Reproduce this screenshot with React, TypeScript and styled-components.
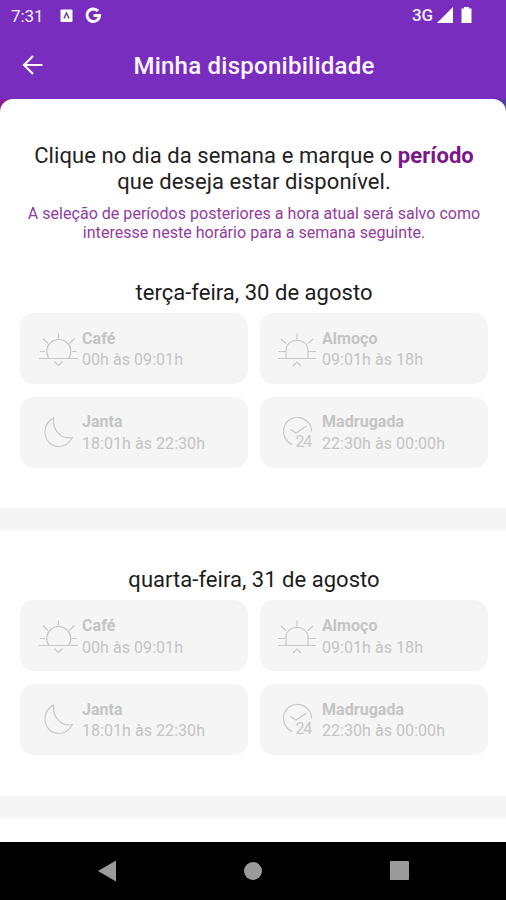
import React from "react";
import styled, { createGlobalStyle } from "styled-components";

const GlobalStyle = createGlobalStyle`
  * { box-sizing: border-box; }
  html, body { margin: 0; padding: 0; background: #fff; overflow: hidden; }
  body { font-family: Roboto, "Liberation Sans", sans-serif; }
  svg { display: block; }
`;

const Screen = styled.div`
  width: 506px;
  height: 900px;
  display: flex;
  flex-direction: column;
  overflow: hidden;
  background: #782dbf;
`;

const StatusBar = styled.div`
  height: 32px;
  flex: none;
  display: flex;
  align-items: center;
  padding: 0 32px 0 11px;
  color: #f6effc;
`;

const Clock = styled.span`
  width: 49px;
  font-size: 17px;
  line-height: 20px;
  letter-spacing: -0.05px;
`;

const Network = styled.span`
  margin-left: auto;
  margin-right: 4px;
  font-size: 17px;
  line-height: 20px;
  padding-bottom: 2px;
  font-weight: 500;
  letter-spacing: -0.1px;
`;

const Header = styled.header`
  height: 67px;
  flex: none;
  display: grid;
  grid-template-columns: 80px 1fr 80px;
  align-items: center;
  color: #fbf6ff;
`;

const BackButton = styled.button`
  border: 0;
  padding: 0 0 1px 20px;
  background: none;
  color: inherit;
`;

const Title = styled.h1`
  margin: 0;
  padding: 1px 0 0 2px;
  text-align: center;
  font-size: 24px;
  line-height: 28px;
  font-weight: 500;
  letter-spacing: 0.25px;
  white-space: nowrap;
`;

const SheetBackdrop = styled.div`
  flex: 1;
  min-height: 0;
  display: flex;
  background: linear-gradient(90deg, #8c1c93 0 50%, #5a3aa6 50%);
`;

const Sheet = styled.main`
  flex: 1;
  overflow: hidden;
  background: #fff;
  border-radius: 13px 13px 0 0;
`;

const Intro = styled.p`
  margin: 44px 0 0;
  padding-left: 2px;
  text-align: center;
  font-size: 22px;
  line-height: 25.5px;
  letter-spacing: 0.07px;
  color: #222;
  white-space: nowrap;
`;

const Accent = styled.strong`
  font-weight: 700;
  color: #7b1588;
`;

const Note = styled.p`
  margin: 10px 0 0;
  padding-left: 2px;
  text-align: center;
  font-size: 16px;
  line-height: 19px;
  letter-spacing: 0.03px;
  color: #913c9e;
  white-space: nowrap;
`;

const DaySection = styled.section`
  height: 287.3px;
  padding: 37px 18px 0 20px;
  border-bottom: 22px solid #f5f5f5;

  &:first-of-type {
    margin-top: 1px;
  }
`;

const DayTitle = styled.h2`
  margin: 0 0 7px;
  text-align: center;
  font-size: 22px;
  line-height: 26px;
  font-weight: 400;
  letter-spacing: 0.03px;
  color: #1c1c1c;
`;

const Grid = styled.div`
  display: grid;
  grid-template-columns: 1fr 1fr;
  gap: 12.5px 12px;
`;

const Card = styled.div`
  height: 71px;
  display: flex;
  align-items: center;
  padding-left: 18px;
  border-radius: 14px;
  background: #f5f5f5;
  color: #c4c4c4;
`;

const CardIcon = styled.div`
  width: 44px;
  flex: none;
`;

const CardText = styled.div`
  padding-top: 1.5px;
  font-size: 16px;
  line-height: 21.5px;
  letter-spacing: 0.05px;
`;

const CardName = styled.div`
  font-weight: 700;
`;

const CardHours = styled.div`
  white-space: nowrap;
`;

const NavBar = styled.nav`
  height: 58.5px;
  flex: none;
  display: flex;
  justify-content: center;
  align-items: center;
  background: #000;
`;

const NavSlot = styled.div`
  width: 146px;
  display: flex;
  justify-content: center;
`;

type PeriodKind = "sunrise" | "noon" | "moon" | "clock";

const PeriodIcon = ({ kind }: { kind: PeriodKind }) => (
  <svg width="40" height="40" viewBox="0 0 40 40" fill="none" stroke="#c8c8c8" strokeWidth="1.2">
    {kind === "sunrise" && (
      <path d="M1 29.500H40M11 29.500A12 12 0 1 1 30.500 29.500M20.500 4.500V9.500M5 9.500L10 14.500M36.500 9.500L31.500 14.500M2 22.500H7M34 22.500H38.500M16.500 32.500L20.500 36.500L24.500 32.500" />
    )}
    {kind === "noon" && (
      <path d="M0 29.500H38M8 29V21.500C8 8 30 8 30 21.500V29M19 4.500V10.500M3 10L8 14.500M35 10L30 14.500M0 22.500H8M30 22.500H38M15 37L19 33L23 37" />
    )}
    {kind === "moon" && (
      <path d="M15.500 6C2 12.500 5 34 20.500 34.500C26.500 34.500 31.500 31 34.300 25.500C23 28 14.500 18 15.500 6Z" />
    )}
    {kind === "clock" && (
      <>
        <path d="M14.500 32.500A14 14 0 1 1 33.500 19.500M12.500 17.500L18 21L28.500 14" />
        <text x="17.500" y="34.500" fontSize="16" letterSpacing="-1.2" fill="#c8c8c8" stroke="none">24</text>
      </>
    )}
  </svg>
);

const periods: { kind: PeriodKind; name: string; hours: string }[] = [
  { kind: "sunrise", name: "Café", hours: "00h às 09:01h" },
  { kind: "noon", name: "Almoço", hours: "09:01h às 18h" },
  { kind: "moon", name: "Janta", hours: "18:01h às 22:30h" },
  { kind: "clock", name: "Madrugada", hours: "22:30h às 00:00h" },
];

const days = ["terça-feira, 30 de agosto", "quarta-feira, 31 de agosto"];

export default function App() {
  return (
    <Screen>
      <GlobalStyle />
      <StatusBar>
        <Clock>7:31</Clock>
        <svg width="42" height="18" viewBox="0 0 42 18">
          <rect x="0.500" y="2.500" width="12" height="12.500" rx="1" fill="#fff" />
          <path d="M4 11.500L6.500 6L9 11.500" fill="none" stroke="#6f3aa5" strokeWidth="1.500" />
          <path d="M38 4A6.300 6.300 0 1 0 39.600 8.500H33.500" fill="none" stroke="#fff" strokeWidth="3" />
        </svg>
        <Network>3G</Network>
        <svg width="37" height="18" viewBox="0 0 37 18" fill="#fff">
          <path d="M0 16L16 0V16Z" />
          <path d="M24.500 1.500L27 1.500V0H32V1.500L34.500 1.500V16H24.500Z" />
        </svg>
      </StatusBar>
      <Header>
        <BackButton aria-label="Voltar">
          <svg width="24" height="24" viewBox="0 0 24 24" fill="none" stroke="currentColor" strokeWidth="2.200">
            <path d="M22.500 12H4M13 3L4 12L13 21" />
          </svg>
        </BackButton>
        <Title>Minha disponibilidade</Title>
      </Header>
      <SheetBackdrop>
        <Sheet>
          <Intro>
            Clique no dia da semana e marque o <Accent>período</Accent>
            <br />
            que deseja estar disponível.
          </Intro>
          <Note>
            A seleção de períodos posteriores a hora atual será salvo como
            <br />
            interesse neste horário para a semana seguinte.
          </Note>
          {days.map((day) => (
            <DaySection key={day}>
              <DayTitle>{day}</DayTitle>
              <Grid>
                {periods.map((p) => (
                  <Card key={p.kind}>
                    <CardIcon>
                      <PeriodIcon kind={p.kind} />
                    </CardIcon>
                    <CardText>
                      <CardName>{p.name}</CardName>
                      <CardHours>{p.hours}</CardHours>
                    </CardText>
                  </Card>
                ))}
              </Grid>
            </DaySection>
          ))}
        </Sheet>
      </SheetBackdrop>
      <NavBar>
        <NavSlot>
          <svg width="18" height="22" viewBox="0 0 18 22"><path d="M0 11L18 0.500V21.500Z" fill="#9b9b9b" /></svg>
        </NavSlot>
        <NavSlot>
          <svg width="18" height="18" viewBox="0 0 18 18"><circle cx="9" cy="9" r="9" fill="#9b9b9b" /></svg>
        </NavSlot>
        <NavSlot>
          <svg width="19" height="19" viewBox="0 0 19 19"><rect width="19" height="19" rx="1" fill="#9b9b9b" /></svg>
        </NavSlot>
      </NavBar>
    </Screen>
  );
}
